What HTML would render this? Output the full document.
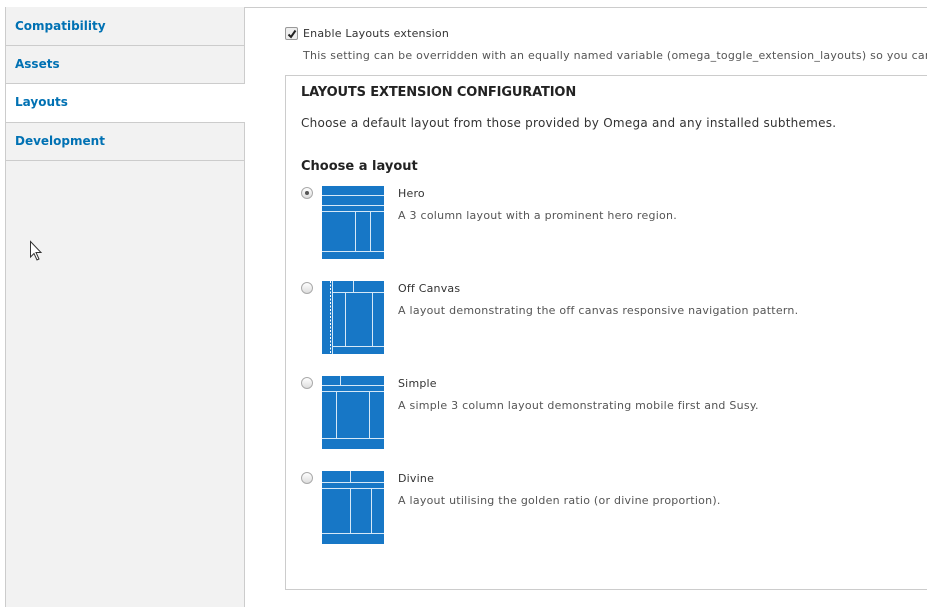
<!DOCTYPE html>
<html><head><meta charset="utf-8"><style>
body{margin:0;width:927px;height:600px;overflow:hidden;background:#fff;font-family:"DejaVu Sans",Verdana,sans-serif;position:relative}
.top{position:absolute;left:5px;right:0;top:7px;height:1px;background:#ccc}
.side{position:absolute;left:5px;top:7px;width:238px;height:600px;background:#f2f2f2;border-left:1px solid #ccc;border-right:1px solid #ccc}
.tab{position:absolute;left:0;width:238px;height:37px;border-bottom:1px solid #ccc;color:#0071b3;font-weight:bold;font-size:12px;line-height:36px;text-indent:9px}
.tab.act{background:#fff;width:239px}
.abs{position:absolute}
.t{font-size:11px;color:#333;letter-spacing:0.2px}
.d{font-size:11px;color:#555;letter-spacing:0.25px}
.box{position:absolute;left:285px;top:75px;width:660px;height:513px;border:1px solid #ccc}
.rad{position:absolute;width:10px;height:10px;border-radius:50%;border:1px solid #aaa;background:linear-gradient(#fff,#ddd)}
</style></head><body>
<div class="top"></div>
<div class="side">
<div class="tab" style="top:1px">Compatibility</div>
<div class="tab" style="top:39px">Assets</div>
<div class="tab act" style="top:77px;height:38px">Layouts</div>
<div class="tab" style="top:116px">Development</div>
</div>
<svg class="abs" style="left:29px;top:240px" width="14" height="22" viewBox="0 0 14 22"><path d="M1.5 1.5V17L5 13.5 8 20 10 19 7 12.5H12Z" fill="#fff" stroke="#333" stroke-width="1"/></svg>
<div class="abs" style="left:285px;top:27px;width:11px;height:11px;border:1px solid #999;border-radius:2px;background:#eee"></div>
<svg class="abs" style="left:286px;top:28px" width="12" height="12"><path d="M2.5 6.5 5 9 9.5 2.5" stroke="#222" stroke-width="2" fill="none"/></svg>
<div class="abs t" style="left:303px;top:27px">Enable Layouts extension</div>
<div class="abs d" style="left:303px;top:49px;white-space:nowrap">This setting can be overridden with an equally named variable (omega_toggle_extension_layouts) so you can</div>
<div class="box"></div>
<div class="abs" style="left:301px;top:85px;font-size:13px;font-weight:bold;color:#222;letter-spacing:-0.15px">LAYOUTS EXTENSION CONFIGURATION</div>
<div class="abs" style="left:301px;top:116px;font-size:12px;color:#333;white-space:nowrap;letter-spacing:0.25px">Choose a default layout from those provided by Omega and any installed subthemes.</div>
<div class="abs" style="left:301px;top:159px;font-size:13px;font-weight:bold;color:#222">Choose a layout</div>

<div class="rad" style="left:301px;top:187px"></div><div class="abs" style="left:305px;top:191px;width:4px;height:4px;border-radius:50%;background:#555"></div>
<svg class="abs" style="left:322px;top:186px" width="62" height="73"><rect width="62" height="73" fill="#1777c6"/><g stroke="#d5e8f7" stroke-width="1"><path d="M0 9.5H62M0 19.5H62M0 25.5H62M0 65.5H62M33.5 25V65M48.5 25V65"/></g></svg>
<div class="abs t" style="left:398px;top:187px">Hero</div>
<div class="abs d" style="left:398px;top:209px">A 3 column layout with a prominent hero region.</div>

<div class="rad" style="left:301px;top:282px"></div>
<svg class="abs" style="left:322px;top:281px" width="62" height="73"><rect width="62" height="73" fill="#1777c6"/><g stroke="#d5e8f7" stroke-width="1"><path d="M10.5 0V73M10 11.5H62M31.5 0V11M10 65.5H62M23.5 12V65M50.5 12V65"/><path d="M8.5 0V73" stroke="#fff" stroke-dasharray="2 1.5"/></g></svg>
<div class="abs t" style="left:398px;top:282px">Off Canvas</div>
<div class="abs d" style="left:398px;top:304px">A layout demonstrating the off canvas responsive navigation pattern.</div>

<div class="rad" style="left:301px;top:377px"></div>
<svg class="abs" style="left:322px;top:376px" width="62" height="73"><rect width="62" height="73" fill="#1777c6"/><g stroke="#d5e8f7" stroke-width="1"><path d="M0 9.5H62M18.5 0V9M0 15.5H62M0 62.5H62M14.5 15V62M47.5 15V62"/></g></svg>
<div class="abs t" style="left:398px;top:377px">Simple</div>
<div class="abs d" style="left:398px;top:399px">A simple 3 column layout demonstrating mobile first and Susy.</div>

<div class="rad" style="left:301px;top:472px"></div>
<svg class="abs" style="left:322px;top:471px" width="62" height="73"><rect width="62" height="73" fill="#1777c6"/><g stroke="#d5e8f7" stroke-width="1"><path d="M0 11.5H62M28.5 0V11M0 17.5H62M0 62.5H62M28.5 17V62M49.5 17V62"/></g></svg>
<div class="abs t" style="left:398px;top:472px">Divine</div>
<div class="abs d" style="left:398px;top:494px">A layout utilising the golden ratio (or divine proportion).</div>
</body></html>
